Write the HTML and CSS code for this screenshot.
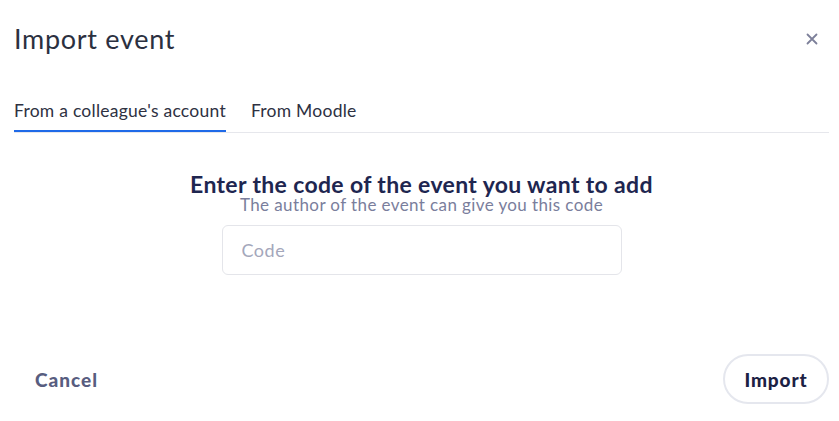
FILE: index.html
```html
<!DOCTYPE html>
<html lang="en">
<head>
<meta charset="utf-8">
<title>Import event</title>
<link rel="stylesheet" href="styles.css">
</head>
<body>
<div class="modal">
  <header class="modal-header">
    <h1 class="modal-title">Import event</h1>
    <button class="close" aria-label="Close">
      <svg width="12" height="12" viewBox="0 0 12 12"><path d="M1.5 1.5L10.5 10.5M10.5 1.5L1.5 10.5" stroke="#7d809a" stroke-width="1.8" stroke-linecap="round"/></svg>
    </button>
  </header>
  <nav class="tabs">
    <span class="tab active">From a colleague's account</span>
    <span class="tab">From Moodle</span>
  </nav>
  <section class="body">
    <h2 class="heading">Enter the code of the event you want to add</h2>
    <p class="sub">The author of the event can give you this code</p>
    <input class="code" type="text" placeholder="Code">
  </section>
  <footer class="footer">
    <button class="cancel">Cancel</button>
    <button class="import">Import</button>
  </footer>
</div>
</body>
</html>
```
FILE: styles.css
```css
* { box-sizing: border-box; }
html, body { margin: 0; padding: 0; background: #fff; }
body { font-family: Lato, "Open Sans", sans-serif; color: #2c3042; }
.modal { width: 839px; height: 421px; padding: 0 10px 0 14px; display: flex; flex-direction: column; }
.modal-header { display: flex; align-items: center; justify-content: space-between; height: 82px; padding: 0 10px 4px 0; }
.modal-title { margin: 0; font-size: 27px; line-height: 32px; letter-spacing: 0.7px; font-weight: 400; color: #2b3040; }
.close { border: 0; background: none; padding: 0; width: 14px; height: 14px; display: flex; align-items: center; justify-content: center; }
.tabs { display: flex; gap: 25px; border-bottom: 1px solid #e6e7ec; height: 51px; }
.tab { font-size: 17.5px; letter-spacing: 0.25px; color: #2e3142; padding-top: 18px; height: 50px; }
.tab.active { border-bottom: 2px solid #1f6ae8; }
.body { display: flex; flex-direction: column; align-items: center; padding-top: 39px; }
.heading { margin: 0; font-size: 23px; letter-spacing: 0.35px; font-weight: 700; color: #1e2650; line-height: 24px; }
.sub { margin: 0; font-size: 17px; letter-spacing: 0.4px; color: #7a7e9c; line-height: 18px; }
.code { margin-top: 11px; width: 400px; height: 50px; border: 1px solid #e4e5ea; border-radius: 6px; padding: 0 19px; font-family: inherit; font-size: 18px; letter-spacing: 0.5px; outline: none; }
.code::placeholder { color: #a4a7bb; }
.footer { margin-top: auto; margin-bottom: 17px; display: flex; justify-content: space-between; align-items: center; }
.cancel { border: 0; background: none; padding: 0 0 0 21px; font-family: inherit; font-weight: 900; font-size: 19px; letter-spacing: 1px; color: #585d80; }
.import { width: 106px; height: 50px; border: 2px solid #e5e7ee; border-radius: 25px; background: #fff; font-family: inherit; font-weight: 900; font-size: 19px; letter-spacing: 0.9px; color: #1c2144; }
```
